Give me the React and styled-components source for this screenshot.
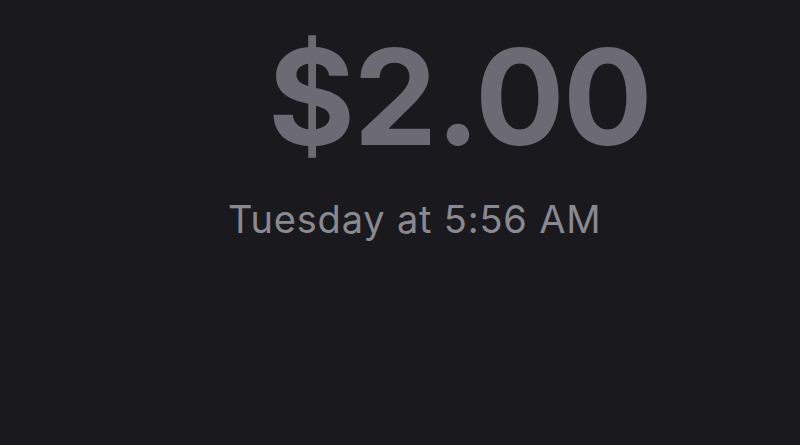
import React from 'react'
import styled, { createGlobalStyle } from 'styled-components'

const GlobalStyle = createGlobalStyle`
  html, body {
    margin: 0;
    padding: 0;
    background: #1a191e;
  }
  body {
    font-family: Inter, "Noto Sans", sans-serif;
  }
`

function App() {
  const payment = { amount: '$2.00', when: 'Tuesday at 5:56 AM' }

  return (
    <>
      <GlobalStyle />
      <Screen>
        <Amount>{payment.amount}</Amount>
        <When>{payment.when}</When>
      </Screen>
    </>
  )
}

export default App

const Screen = styled.div`
  width: 800px;
  height: 445px;
  background: #1a191e;
  display: flex;
  flex-direction: column;
  align-items: flex-start;
  box-sizing: border-box;
  padding-top: 30px;
  overflow: hidden;
`

const Amount = styled.div`
  margin-left: 268px;
  color: #6c6a72;
  font-size: 133px;
  font-weight: 700;
  line-height: 1;
  letter-spacing: -1.5px;
`

const When = styled.div`
  margin-left: 228px;
  margin-top: 37px;
  color: #8b8990;
  font-size: 38px;
  font-weight: 400;
  line-height: 1;
  letter-spacing: 0.8px;
`
